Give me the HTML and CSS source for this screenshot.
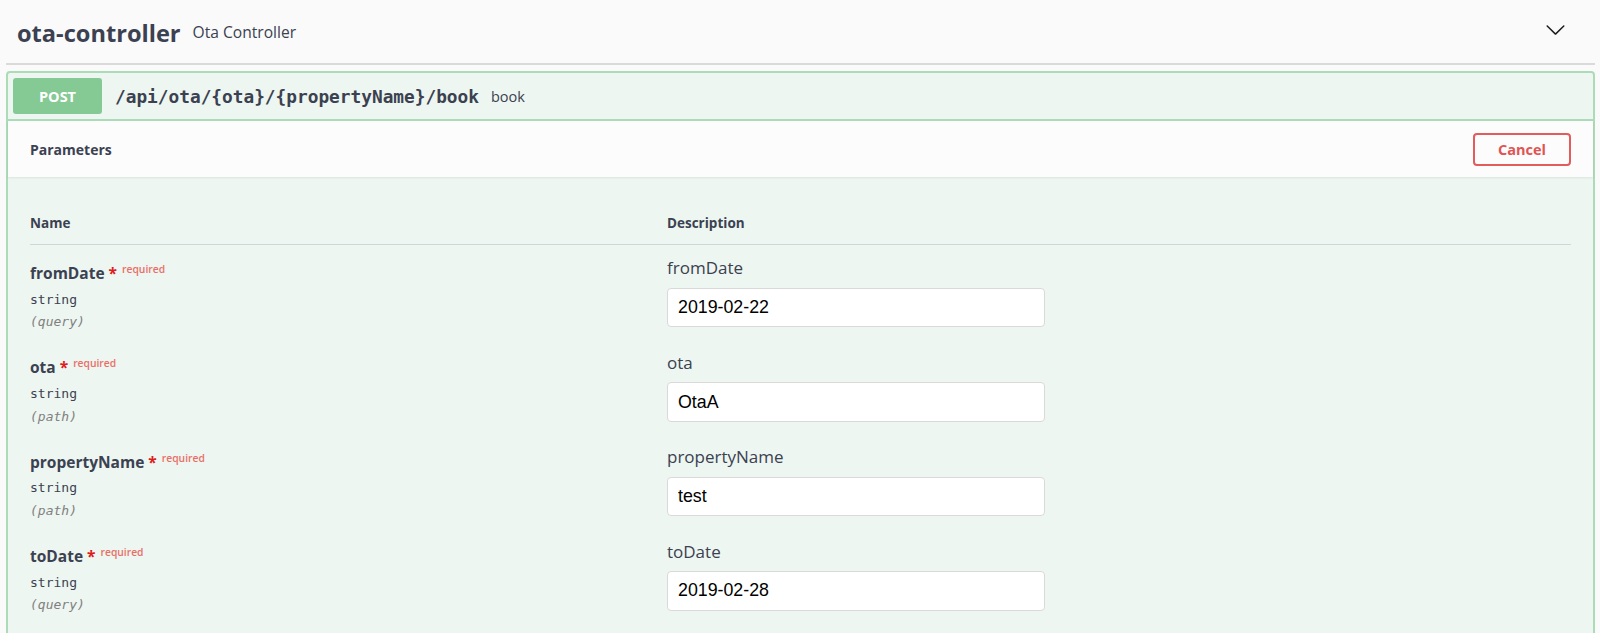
FILE: index.html
```html
<!DOCTYPE html>
<html lang="en">
<head>
<meta charset="utf-8">
<title>ota-controller</title>
<link rel="stylesheet" href="styles.css">
</head>
<body>
<div class="wrap">
  <div class="tag">
    <h3 class="tag-title">ota-controller</h3>
    <small class="tag-desc">Ota Controller</small>
    <svg class="chev" viewBox="0 0 20 20" width="21" height="21" aria-hidden="true"><path d="M17.418 6.109c.272-.268.709-.268.979 0s.271.701 0 .969l-7.908 7.83c-.27.268-.707.268-.979 0l-7.908-7.83c-.27-.268-.27-.701 0-.969.271-.268.709-.268.979 0L10 13.25l7.418-7.141z"/></svg>
  </div>
  <div class="opblock">
    <div class="summary">
      <span class="method">POST</span>
      <span class="path">/api/ota/{ota}/{propertyName}/book</span>
      <span class="sdesc">book</span>
    </div>
    <div class="sec-head">
      <h4 class="sec-title">Parameters</h4>
      <button class="cancel" type="button">Cancel</button>
    </div>
    <div class="params">
      <div class="thead">
        <div class="th">Name</div>
        <div class="th">Description</div>
      </div>
      <div class="prow">
        <div class="pname">
          <div class="name">fromDate<span class="star">&nbsp;*</span><span class="req">required</span></div>
          <div class="ptype">string</div>
          <div class="pin">(query)</div>
        </div>
        <div class="pdesc">
          <div class="plabel">fromDate</div>
          <input class="pinput" type="text" value="2019-02-22">
        </div>
      </div>
      <div class="prow">
        <div class="pname">
          <div class="name">ota<span class="star">&nbsp;*</span><span class="req">required</span></div>
          <div class="ptype">string</div>
          <div class="pin">(path)</div>
        </div>
        <div class="pdesc">
          <div class="plabel">ota</div>
          <input class="pinput" type="text" value="OtaA">
        </div>
      </div>
      <div class="prow">
        <div class="pname">
          <div class="name">propertyName<span class="star">&nbsp;*</span><span class="req">required</span></div>
          <div class="ptype">string</div>
          <div class="pin">(path)</div>
        </div>
        <div class="pdesc">
          <div class="plabel">propertyName</div>
          <input class="pinput" type="text" value="test">
        </div>
      </div>
      <div class="prow">
        <div class="pname">
          <div class="name">toDate<span class="star">&nbsp;*</span><span class="req">required</span></div>
          <div class="ptype">string</div>
          <div class="pin">(query)</div>
        </div>
        <div class="pdesc">
          <div class="plabel">toDate</div>
          <input class="pinput" type="text" value="2019-02-28">
        </div>
      </div>
    </div>
  </div>
</div>
</body>
</html>
```
FILE: styles.css
```css
html, body {
  margin: 0;
  padding: 0;
  overflow: hidden;
  background: #fafafa;
}
body {
  font-family: "Open Sans", "Noto Sans", sans-serif;
  color: #3b4151;
}
.wrap {
  padding: 0 5px 0 6px;
}
.tag {
  display: flex;
  align-items: flex-start;
  box-sizing: border-box;
  height: 65px;
  padding: 0 29px 0 11px;
  border-bottom: 2px solid #dadada;
}
.tag-title {
  margin: 18px 0 0 0;
  font-size: 23.6px;
  line-height: 31px;
  font-weight: 700;
  color: #3b4151;
}
.tag-desc {
  margin: 22.25px 0 0 12px;
  font-size: 15.6px;
  line-height: 20px;
  color: #3b4151;
}
.chev {
  margin: 19px 0 0 auto;
  fill: #1d1d1d;
}
.opblock {
  margin-top: 6px;
  border: 2px solid #acdbb8;
  border-radius: 4px;
  background: #edf6f0;
  padding-bottom: 40px;
}
.summary {
  display: flex;
  align-items: center;
  padding: 5px;
  border-bottom: 2px solid #acdbb8;
}
.method {
  width: 89px;
  height: 36px;
  display: flex;
  align-items: center;
  justify-content: center;
  border-radius: 3px;
  background: #85c995;
  color: #fff;
  font-size: 14.5px;
  font-weight: 700;
}
.path {
  margin-left: 13px;
  font-family: "DejaVu Sans Mono", "Liberation Mono", monospace;
  font-size: 17.8px;
  font-weight: 600;
  color: #3b4151;
}
.sdesc {
  margin-left: 12px;
  font-size: 14.5px;
  color: #3b4151;
}
.sec-head {
  display: flex;
  align-items: center;
  justify-content: space-between;
  height: 56px;
  padding: 0 22px 0 22px;
  background: #fbfcfb;
  box-shadow: 0 1px 2px rgba(0, 0, 0, 0.08);
}
.sec-title {
  margin: 0;
  font-size: 14px;
  font-weight: 700;
  color: #3b4151;
}
.cancel {
  box-sizing: border-box;
  width: 98px;
  height: 33px;
  border: 2px solid #e25c5c;
  border-radius: 4px;
  background: transparent;
  color: #e05454;
  font-family: "Open Sans", "Noto Sans", sans-serif;
  font-size: 14.5px;
  font-weight: 700;
}
.params {
  padding: 36px 22px 0 22px;
}
.thead {
  display: grid;
  grid-template-columns: 637px 1fr;
  padding-bottom: 11px;
  border-bottom: 1px solid #d3d6d9;
}
.th {
  font-size: 13.5px;
  line-height: 20px;
  font-weight: 700;
  color: #3b4151;
}
.prow {
  display: grid;
  grid-template-columns: 637px 1fr;
  height: 94.4px;
}
.pname {
  padding-top: 13px;
}
.name {
  font-size: 15.5px;
  line-height: 22px;
  font-weight: 700;
  color: #3b4151;
}
.star {
  color: #e01b1b;
}
.req {
  margin-left: 5px;
  font-size: 10.3px;
  font-weight: 600;
  color: #ea6e68;
  vertical-align: 6px;
}
.ptype {
  margin-top: 4.7px;
  font-family: "DejaVu Sans Mono", "Liberation Mono", monospace;
  font-size: 13px;
  line-height: 22px;
  color: #3b4151;
}
.pin {
  margin-top: 0.5px;
  font-family: "DejaVu Sans Mono", "Liberation Mono", monospace;
  font-size: 13px;
  line-height: 22px;
  font-style: italic;
  color: #808080;
}
.pdesc {
  padding-top: 12.4px;
}
.plabel {
  font-size: 17px;
  line-height: 22px;
  color: #3b4151;
}
.pinput {
  display: block;
  box-sizing: border-box;
  margin-top: 8.6px;
  width: 378px;
  height: 39.4px;
  padding: 0 10px;
  border: 1px solid #d9d9d9;
  border-radius: 4px;
  background: #fff;
  font-family: "Liberation Sans", Arial, sans-serif;
  font-size: 17.8px;
  color: #000;
  outline: none;
}
```
